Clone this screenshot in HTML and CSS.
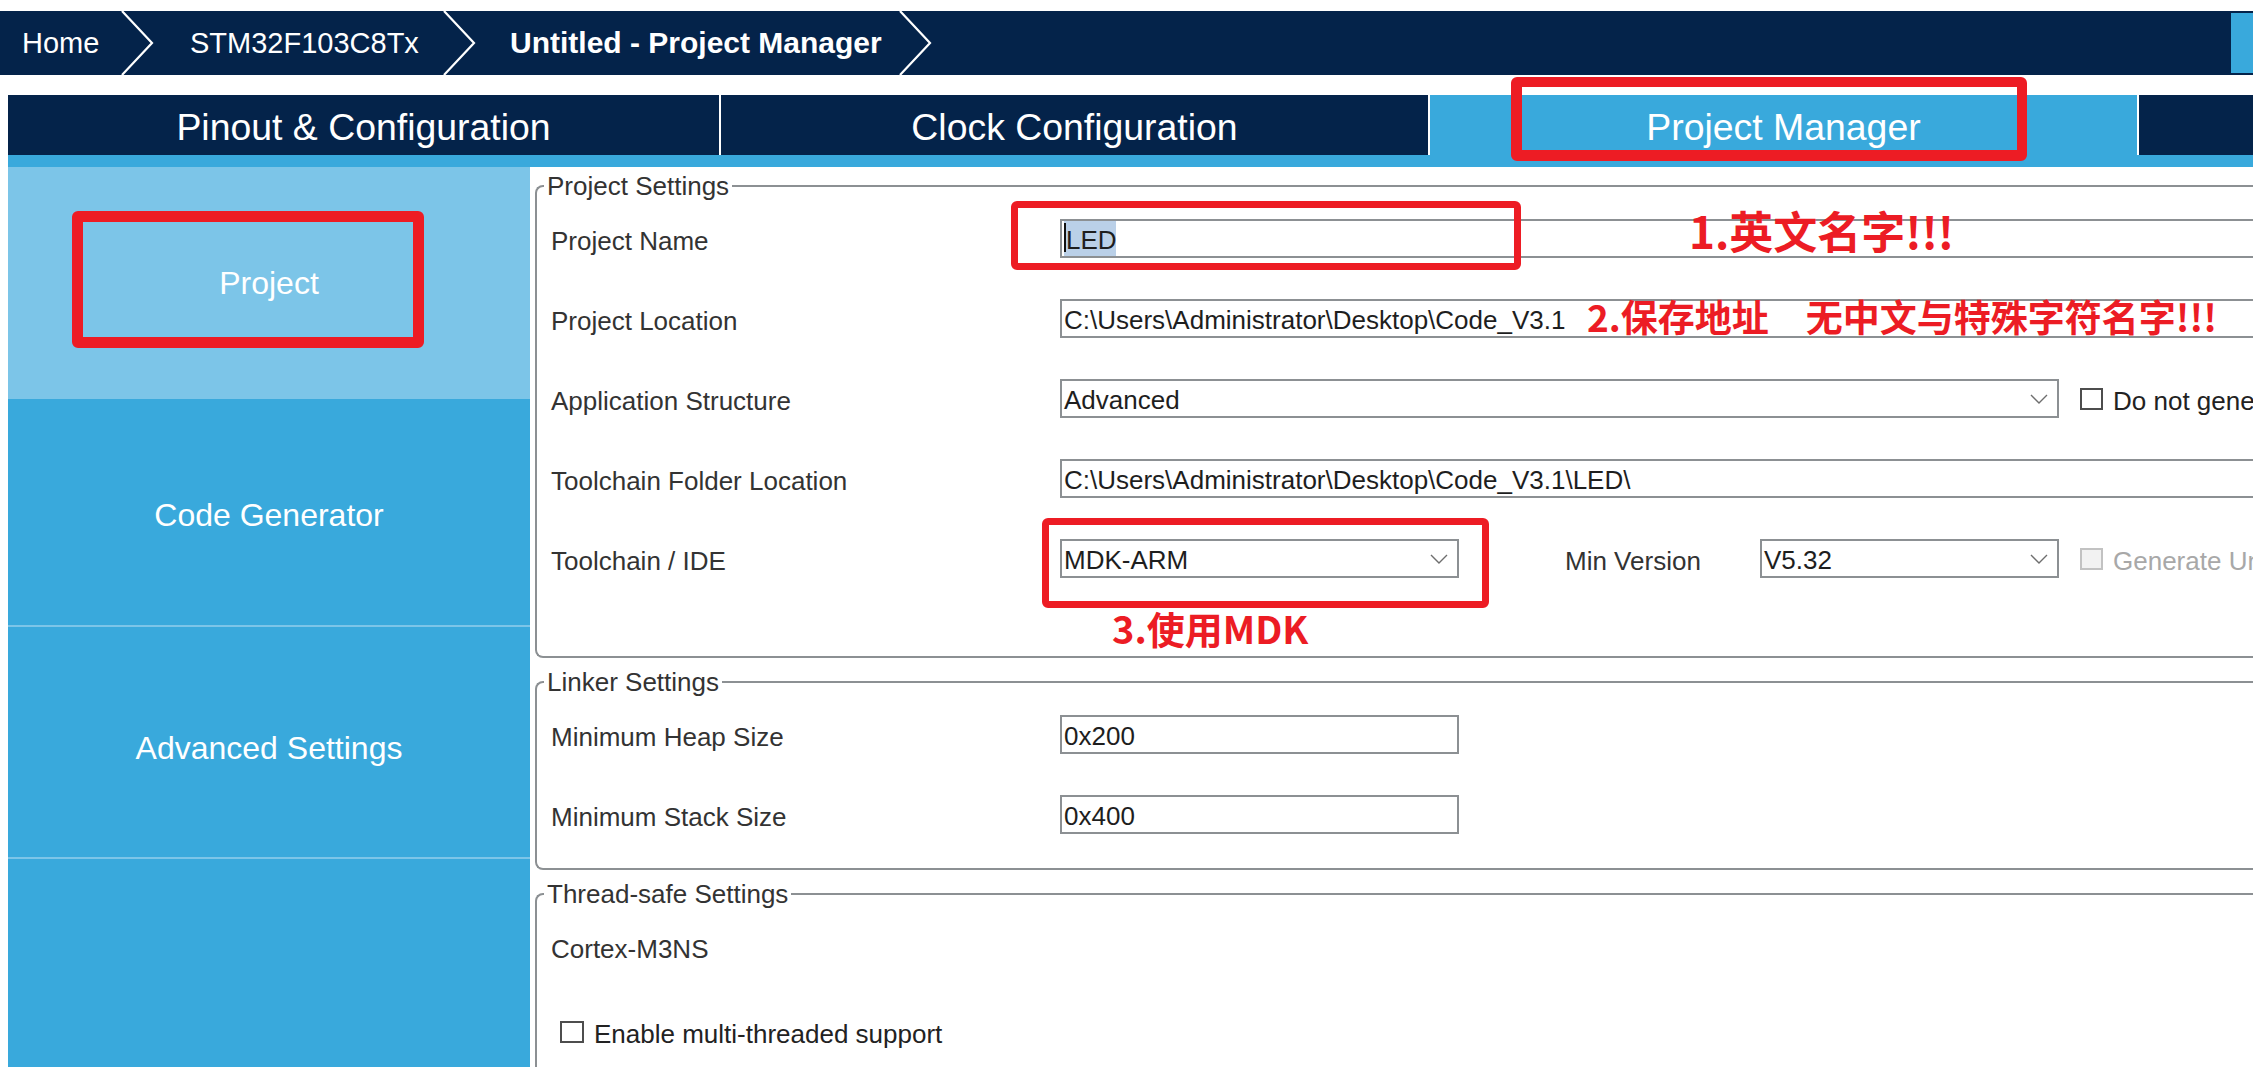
FILE: index.html
```html
<!DOCTYPE html>
<html lang="en">
<head>
<meta charset="utf-8">
<title>Untitled - Project Manager</title>
<link rel="stylesheet" href="styles.css">
</head>
<body>
<div class="top">
  <header class="crumbs">
    <div class="crumb crumb-home">Home</div>
    <svg class="chev" viewBox="0 0 32 64" width="32" height="64"><polyline points="1,0 31,32 1,64"/></svg>
    <div class="crumb crumb-mcu">STM32F103C8Tx</div>
    <svg class="chev" viewBox="0 0 32 64" width="32" height="64"><polyline points="1,0 31,32 1,64"/></svg>
    <div class="crumb crumb-cur">Untitled - Project Manager</div>
    <svg class="chev" viewBox="0 0 32 64" width="32" height="64"><polyline points="1,0 31,32 1,64"/></svg>
    <div class="crumb-btn"></div>
  </header>
  <nav class="tabs">
    <div class="tab tab-first">Pinout &amp; Configuration</div>
    <div class="tab">Clock Configuration</div>
    <div class="tab tab-active">Project Manager</div>
    <div class="tab">Tools</div>
  </nav>
  <div class="tab-strip"></div>
  <div class="mark mark-tab"></div>
</div>

<div class="workspace">
  <aside class="sidebar">
    <div class="side-item side-active">Project</div>
    <div class="side-item side-code">Code Generator</div>
    <div class="side-item side-adv">Advanced Settings</div>
    <div class="side-item side-rest"></div>
    <div class="mark mark-side"></div>
  </aside>

  <main class="panel">
    <fieldset class="group group-project">
      <legend>Project Settings</legend>
      <div class="rows">
        <div class="row">
          <span class="lbl">Project Name</span>
          <div class="field field-wide"><span class="sel">LED</span></div>
        </div>
        <div class="row">
          <span class="lbl">Project Location</span>
          <div class="field field-wide">C:\Users\Administrator\Desktop\Code_V3.1</div>
        </div>
        <div class="row">
          <span class="lbl">Application Structure</span>
          <div class="field select sel-wide"><span>Advanced</span><svg class="arrow" viewBox="0 0 18 10" width="18" height="10"><polyline points="1,1 9,9 17,1"/></svg></div>
          <span class="cb"></span>
          <span class="cb-text">Do not generate the main()</span>
        </div>
        <div class="row">
          <span class="lbl">Toolchain Folder Location</span>
          <div class="field field-wide">C:\Users\Administrator\Desktop\Code_V3.1\LED\</div>
        </div>
        <div class="row">
          <span class="lbl">Toolchain / IDE</span>
          <div class="field select sel-mid"><span>MDK-ARM</span><svg class="arrow" viewBox="0 0 18 10" width="18" height="10"><polyline points="1,1 9,9 17,1"/></svg></div>
          <span class="lbl lbl-min">Min Version</span>
          <div class="field select sel-sm"><span>V5.32</span><svg class="arrow" viewBox="0 0 18 10" width="18" height="10"><polyline points="1,1 9,9 17,1"/></svg></div>
          <span class="cb cb-dis"></span>
          <span class="cb-text cb-text-dis">Generate Under Root</span>
        </div>
      </div>
    </fieldset>

    <fieldset class="group group-linker">
      <legend>Linker Settings</legend>
      <div class="rows">
        <div class="row">
          <span class="lbl">Minimum Heap Size</span>
          <div class="field sel-mid">0x200</div>
        </div>
        <div class="row">
          <span class="lbl">Minimum Stack Size</span>
          <div class="field sel-mid">0x400</div>
        </div>
      </div>
    </fieldset>

    <fieldset class="group group-thread">
      <legend>Thread-safe Settings</legend>
      <div class="row">
        <span class="lbl">Cortex-M3NS</span>
      </div>
      <div class="row row-check">
        <span class="cb cb-thread"></span>
        <span class="cb-text">Enable multi-threaded support</span>
      </div>
    </fieldset>

    <div class="mark mark-led"></div>
    <div class="mark mark-mdk"></div>
    <div class="note note-1">1.英文名字!!!</div>
    <div class="note note-2">2.保存地址　无中文与特殊字符名字!!!</div>
    <div class="note note-3">3.使用MDK</div>
  </main>
</div>
</body>
</html>
```

FILE: styles.css
```css
html, body {
  margin: 0;
  padding: 0;
  width: 2253px;
  height: 1067px;
  overflow: hidden;
  background: #ffffff;
  font-family: "Liberation Sans", Arial, sans-serif;
}

/* ---------- top area ---------- */
.top {
  position: relative;
  padding-top: 11px;
}

.crumbs {
  display: flex;
  align-items: center;
  height: 64px;
  background: #04234a;
  color: #ffffff;
  font-size: 29px;
}

.crumb {
  height: 64px;
  display: flex;
  align-items: center;
  white-space: nowrap;
  box-sizing: border-box;
}
.crumb-home { width: 121px; padding-left: 22px; }
.crumb-mcu { width: 290px; padding-left: 37px; }
.crumb-cur { width: 424px; padding-left: 35px; font-weight: bold; font-size: 30px; }

.chev {
  flex: 0 0 32px;
  overflow: visible;
}
.chev polyline {
  fill: none;
  stroke: #ffffff;
  stroke-width: 2.2;
}

.crumb-btn {
  margin-left: auto;
  width: 22px;
  height: 60px;
  background: #39a9dc;
}

.tabs {
  display: flex;
  gap: 2px;
  margin-top: 20px;
  margin-left: 8px;
  height: 60px;
  background: #ffffff;
}
.tab {
  box-sizing: border-box;
  flex: 0 0 707px;
  display: flex;
  align-items: center;
  justify-content: center;
  padding-top: 4px;
  background: #04234a;
  color: #ffffff;
  font-size: 37.4px;
  white-space: nowrap;
}
.tab-first { flex-basis: 711px; }
.tab-active { background: #39a9dc; }

.tab-strip {
  margin-left: 8px;
  height: 12px;
  background: #39a9dc;
}

/* ---------- red annotation boxes ---------- */
.mark {
  position: absolute;
  box-sizing: border-box;
  border: 7px solid #ed1c24;
  border-radius: 6px;
}
.mark-tab {
  left: 1511px;
  top: 77px;
  width: 516px;
  height: 84px;
  border-width: 10px 10px 11px 11px;
}
.mark-side {
  left: 64px;
  top: 44px;
  width: 352px;
  height: 137px;
  border-width: 11px;
}
.mark-led {
  left: 481px;
  top: 34px;
  width: 510px;
  height: 69px;
}
.mark-mdk {
  left: 512px;
  top: 351px;
  width: 447px;
  height: 90px;
}

.note {
  position: absolute;
  font-family: "Noto Sans CJK SC", "Liberation Sans", sans-serif;
  font-weight: bold;
  color: #ec1c24;
  line-height: 1;
  white-space: nowrap;
}
.note-1 { left: 1159px; top: 41px; font-size: 44px; }
.note-2 { left: 1057px; top: 131px; font-size: 37px; }
.note-3 { left: 582px; top: 442px; font-size: 38px; }

/* ---------- workspace ---------- */
.workspace {
  display: flex;
  margin-left: 8px;
  height: 900px;
}

.sidebar {
  position: relative;
  flex: 0 0 522px;
  background: #39a9dc;
  color: #ffffff;
  font-size: 32px;
}
.side-item {
  box-sizing: border-box;
  display: flex;
  align-items: center;
  justify-content: center;
  white-space: nowrap;
}
.side-active { height: 232px; background: #7cc5e8; }
.side-code { height: 228px; padding-top: 6px; border-bottom: 2px solid #7cc5e8; }
.side-adv { height: 232px; padding-top: 12px; border-bottom: 2px solid #7cc5e8; }

.panel {
  position: relative;
  flex: 1 1 auto;
  overflow: hidden;
  padding-left: 5px;
  color: #333333;
  font-size: 26px;
}

.group {
  box-sizing: border-box;
  width: 1900px;
  min-width: 0;
  margin: 0;
  border: 2px solid #8c9093;
  border-right: none;
  border-radius: 8px 0 0 8px;
  padding: 18px 0 78px 14px;
}
.group legend {
  font-size: 26px;
  line-height: 30px;
  margin-left: -7px;
  padding: 0 3px;
  color: #333333;
  white-space: nowrap;
}
.group-project { margin-top: 4px; }
.group-linker { margin-top: 9px; padding-bottom: 34px; }
.group-thread { margin-top: 9px; padding-bottom: 200px; }

.rows {
  display: flex;
  flex-direction: column;
  gap: 41px;
}
.row {
  display: flex;
  align-items: center;
  height: 39px;
  white-space: nowrap;
}
.row-check { margin-top: 46px; padding-left: 9px; }

.lbl {
  flex: 0 0 509px;
  padding-top: 5px;
  color: #333333;
}
.lbl-min {
  flex-basis: 195px;
  margin-left: 106px;
}

.field {
  box-sizing: border-box;
  flex: 0 0 auto;
  height: 39px;
  border: 2px solid #8c9093;
  background: #ffffff;
  display: flex;
  align-items: center;
  padding-left: 2px;
  padding-top: 4px;
  color: #1e1e1e;
  font-size: 26px;
  white-space: nowrap;
}
.field-wide { width: 1300px; }
.sel-wide { width: 999px; }
.sel-mid { width: 399px; }
.sel-sm { width: 299px; }

.select {
  justify-content: space-between;
  padding-right: 9px;
}
.arrow {
  margin-top: -4px;
}
.arrow polyline {
  fill: none;
  stroke: #6e6e6e;
  stroke-width: 1.4;
}

.field-wide:has(.sel) {
  padding-top: 0;
}
.sel {
  position: relative;
  align-self: stretch;
  display: flex;
  align-items: center;
  padding: 4px 0 0 2px;
  width: 50px;
  background: #bad0e8;
  color: #1e1e1e;
}
.sel::before {
  content: "";
  position: absolute;
  left: 0;
  top: 2px;
  width: 2px;
  height: 29px;
  background: #111111;
}

.cb {
  box-sizing: border-box;
  flex: 0 0 23px;
  height: 22px;
  margin-left: 21px;
  border: 2px solid #4d4d4d;
  background: #ffffff;
}
.cb-dis {
  border-color: #c2c2c2;
  background: #f2f2f2;
}
.cb-thread {
  flex-basis: 24px;
  margin-left: 0;
}
.cb-text {
  margin-left: 10px;
  padding-top: 5px;
  color: #222222;
}
.cb-text-dis { color: #a8a8a8; }
```
